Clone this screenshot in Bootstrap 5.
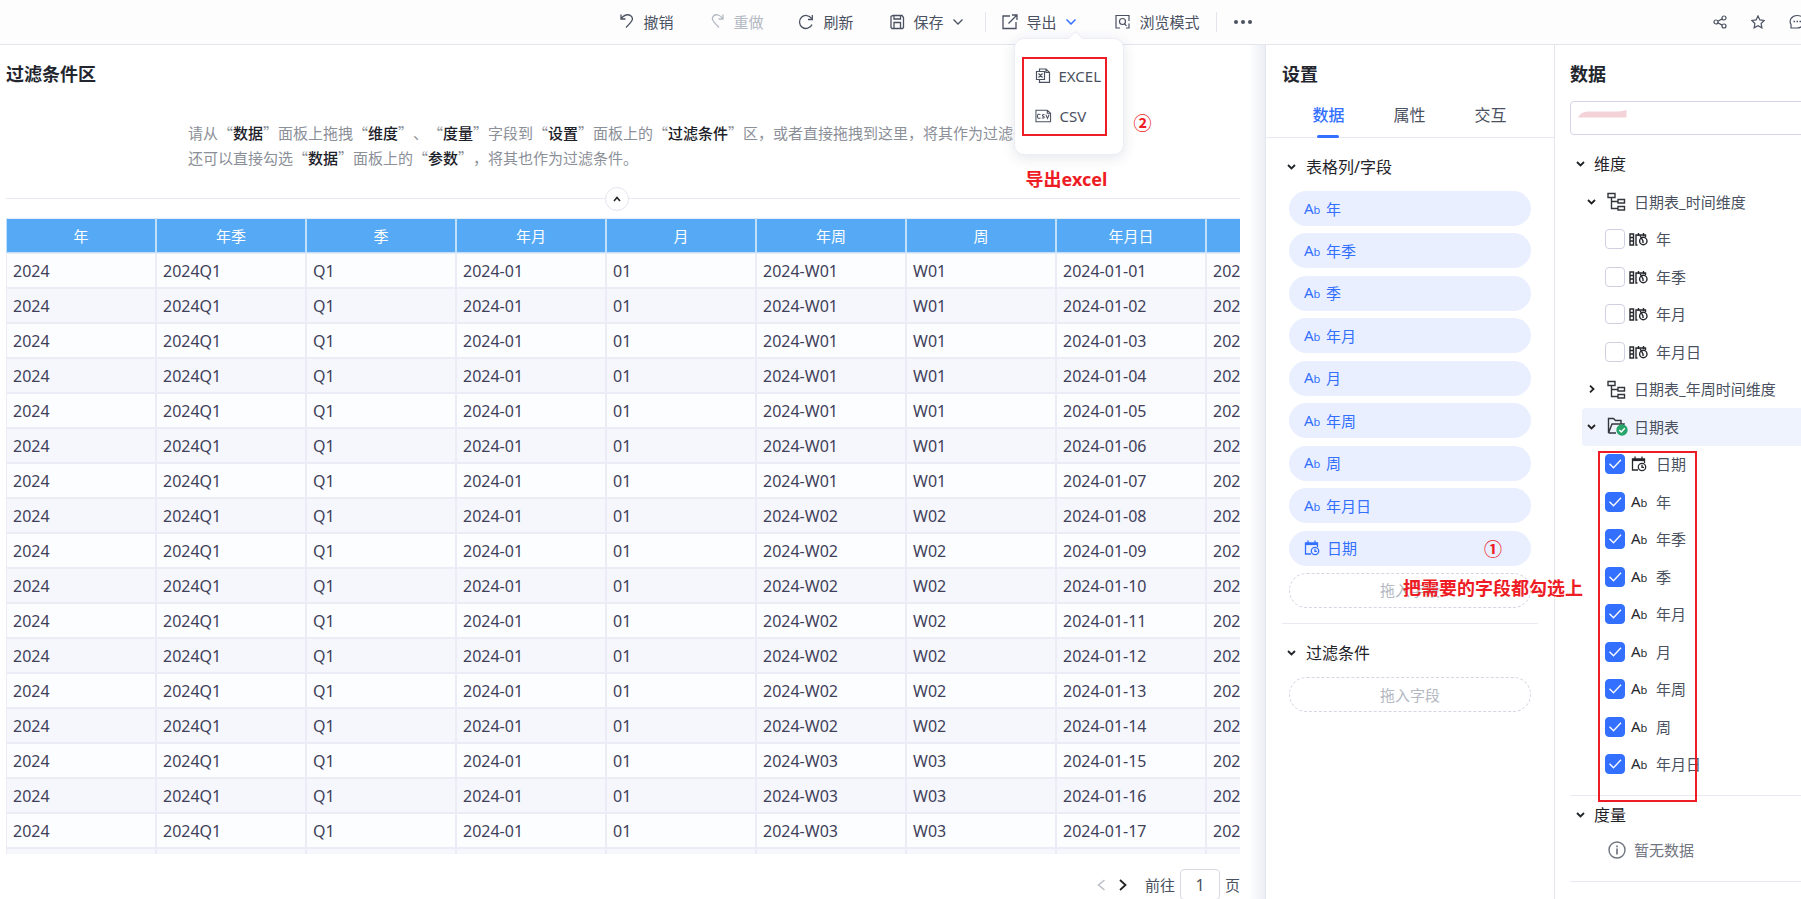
<!DOCTYPE html>
<html lang="zh-CN">
<head>
<meta charset="utf-8">
<meta name="viewport" content="width=device-width, initial-scale=1">
<title>过滤条件区</title>
<link rel="stylesheet" href="https://cdn.jsdelivr.net/npm/bootstrap@5.3.0/dist/css/bootstrap.min.css">
<style>
body{font-family:"Noto Sans","Noto Sans CJK SC",sans-serif;font-size:15px;line-height:22px;color:#4a5160;background:#fff}
svg{fill:none;flex:none}
svg:not([stroke]){stroke:currentColor}
button{color:inherit}
.topbar{height:45px;border-bottom:1px solid #e4e6ec;background:#fdfdfe;padding-left:70px;display:grid;grid-template-columns:1fr auto 1fr}
.tool{border:0;background:none;padding:0;display:flex;align-items:center;gap:9px;white-space:nowrap}
.tool:disabled{color:#b4b9c2}
.toolset{display:flex;align-items:center;gap:35px;margin-right:22px}
.vline{width:1px;height:20px;background:#e4e6ef}
.side-tools{margin-right:-4px}
.titleline{height:56px;padding-top:4px;font-size:18px;font-weight:700;color:#23262e;display:flex;align-items:center;margin:0;flex:none}
.canvas-pad{padding:0 25px 0 6px}
.shade{background:linear-gradient(to right,#fff calc(100% - 16px),#eceef5)}
.hint{font-family:"Noto Sans CJK SC",sans-serif;line-height:25px;color:#8b8f98;margin:19px auto 0;white-space:nowrap;height:78px;flex:none;text-spacing-trim:space-all;font-kerning:none}
.hint b{font-weight:500;color:#1c2028}
.foldline{height:1px;background:#e8e9f3;margin-bottom:19px;padding-right:12px}
.fold{width:24px;height:24px;border:1px solid #e4e6ee;background:#fff;padding:0;line-height:0}
.gridwrap{overflow:hidden}
.datagrid{table-layout:fixed;width:1350px;border-collapse:separate;border-spacing:0;color:#3f3f5a;font-size:16px}
.datagrid th,.datagrid td{height:35px;border:1px solid #ebecf6;padding:0 6px;line-height:22px}
.datagrid td{background:#fcfdff}
.datagrid tr:nth-child(even) td{background:#f6f7fc}
.datagrid th{background:#56a9f4;color:#fff;text-align:center;font-weight:400;font-size:15px;border-color:#bfdffa;border-top-color:#e4eef9}
.pager{height:45px;padding-top:16px}
.pager input{width:40px;height:31px;border:1px solid #d9dae6;border-radius:4px;text-align:center;color:#4a5160;font-size:16px;padding:0;margin:0 5px}
.pager button{border:0;background:none;padding:0;line-height:0}
.settings{width:290px;border-left:1px solid #e4e6ee;border-right:1px solid #e4e6ee;background:#fff}
.tabs{height:37px;border-bottom:1px solid #e8e9f1;padding-left:22px;font-size:16px;line-height:24px}
.tabs button{border:0;background:none;padding:0 0 9px;width:81px;position:relative}
.tabs .on{color:#3370ff;font-weight:500}
.tabs .on::after{content:"";position:absolute;left:29px;bottom:-1px;width:22px;height:3px;border-radius:2px;background:#3370ff}
.sect{font-size:16px;line-height:24px;color:#1f2329;display:flex;align-items:center;margin:0;font-weight:400}
.settings .sect{height:53px;padding:4px 0 0 21px;gap:10px}
.pills{height:417px;margin:0 23px}
.pill,.dropzone{height:35px;border-radius:18px;display:flex;align-items:center}
.pill{background:#e9efff;color:#3370ff;padding-left:15px;gap:7px}
.dropzone{border:1px dashed #d4d6e4;color:#b3b8c2;justify-content:center}
.ab{font-size:15px;width:15px;display:inline-flex;align-items:baseline;line-height:20px}
.ab i{font-style:normal;font-size:11px}
.rule{height:1px;background:#e8e9f1}
.datapane{width:246px;overflow:hidden;padding-left:15px}
.search{height:34px;width:260px;border:1px solid #d3d5e6;border-radius:4px}
.datapane .sect{gap:9px;padding-left:6px}
.tree{height:600px}
.node{flex:1 1 0;padding-left:17px;display:flex;align-items:center;white-space:nowrap}
.node.sel{background:#eff3fe;margin-left:12px;padding-left:5px;border-radius:4px 0 0 4px}
.leaf{padding-left:35px}
.leaf .form-check-input{width:20px;height:20px;margin:0 4px 0 0;border:1px solid #cfd1e2;border-radius:4px;box-shadow:none;flex:none}
.leaf .form-check-input:checked{background-color:#3370ff;border-color:#3370ff;background-size:20px;background-image:url("data:image/svg+xml,%3Csvg xmlns='http://www.w3.org/2000/svg' viewBox='0 0 20 20'%3E%3Cpath d='M4.5 9.8l4 4 7.500-8' fill='none' stroke='white' stroke-width='1.300'/%3E%3C/svg%3E")}
.kind{width:19px;margin-right:8px;display:flex;justify-content:center;color:#26282d}
.branch-ico{width:19px;margin:0 8px 0 11px;display:flex;color:#33363c}
.note{position:absolute;color:#ee1c25;font-weight:700;font-size:18px;line-height:24px;white-space:nowrap;z-index:5}
.frame{position:absolute;border:2px solid #ee1c25;z-index:5;pointer-events:none}
.export-menu{position:absolute;left:12px;top:27px;width:110px;height:117px;background:#fff;border:1px solid #eceef5;border-radius:10px;box-shadow:0 3px 14px rgba(40,50,90,.12);z-index:10;padding:17px 0 0 20px}
.export-menu::before{content:"";position:absolute;left:55px;top:-6px;width:11px;height:11px;background:#fff;border:solid #eceef5;border-width:1px 0 0 1px;transform:rotate(45deg)}
.export-menu button{border:0;background:none;padding:0;height:40px;display:flex;align-items:center;gap:8px}
</style>
<script src="https://cdn.jsdelivr.net/npm/bootstrap@5.3.0/dist/js/bootstrap.bundle.min.js"></script>
</head>
<body class="vh-100 overflow-hidden d-flex flex-column">
<header class="topbar position-relative flex-shrink-0">
  <span></span>
  <nav class="d-flex align-items-center position-relative" aria-label="工具栏">
    <div class="toolset">
      <button class="tool"><svg width="16" height="16" viewBox="-2 1 16 16" stroke-width="1.300"><path d="M1 1.500V6h4.500M1.300 5.500C3.500 2 8 .5 11 3c3 2.700 1.500 5-5 11.500"/></svg>撤销</button>
      <button class="tool" disabled><svg width="16" height="16" viewBox="-3 1 16 16" stroke-width="1.300"><path d="M12 1.500V6H7.500M11.700 5.500C9.500 2 5 .5 2.500 3 0 5.700 1.500 8 8 14.500"/></svg>重做</button>
      <button class="tool"><svg width="16" height="16" viewBox="0 0 16 16" stroke-width="1.300"><path d="M14 10.500A6.500 6.500 0 1 1 13.500 4.500M14.300 1v4.500H10"/></svg>刷新</button>
      <button class="tool"><svg width="16" height="16" viewBox="0 0 16 16" stroke-width="1.300"><path d="M4 1.500h9l1.500 2v10l-1 1H3l-1-1v-11zM5 1.500v3.500h6.500V1.500M5 14.500V8.500h6.500v6"/></svg>保存<svg width="10" height="6" viewBox="0 0 10 6" stroke-width="1.300"><path d="M.5.5L5 5 9.500.5"/></svg></button>
    </div>
    <span class="vline me-3"></span>
    <div class="position-relative">
      <button class="tool"><svg width="16" height="16" viewBox="0 0 16 16" stroke-width="1.300"><path d="M8 2H1v12.500h13V8M10 1h5v5M15 1L6.500 9.500"/></svg>导出<svg width="10" height="6" viewBox="0 0 10 6" stroke="#3370ff" stroke-width="1.500"><path d="M.5.5L5 5 9.500.5"/></svg></button>
      <div class="export-menu">
        <button><svg width="16" height="16" viewBox="0 0 16 16" stroke-width="1.200"><path d="M4.500 3V1h6.500l3.500 3.500v9.900H4.500V12M11 1v3.500h3.500M1.500 3.500h8v8h-8zM3.500 5.500l4 4m0-4l-4 4"/></svg>EXCEL</button>
        <button><svg width="17" height="14" viewBox="0 0 18 14" stroke-width="1.100"><path d="M1 4V1h12l3.500 3V13H1V4M13 1v3h3.500M5.800 5.500C4 4.500 2.500 5.200 2.500 7.300s1.500 2.700 3.300 1.700M10 5.500C8 4.800 7 6.800 8.700 7.200s1.500 2.500-1.500 1.800M11.500 5.500l1.700 4L15 5.500"/></svg>CSV</button>
        <span class="frame" style="left:7px;top:18px;width:85px;height:79px"></span>
        <span class="note" style="left:11px;top:128px">导出excel</span>
        <span class="note" style="left:119px;top:72px">②</span>
      </div>
    </div>
    <button class="tool" style="margin-left:39px"><svg width="16" height="16" viewBox="0 0 16 16" stroke-width="1.200"><path d="M5 14H1V1.500h13V7M14 9.500V14h-3"/><circle cx="7.500" cy="7.500" r="3"/><path d="M9.500 9.800l2 2"/></svg>浏览模式</button>
    <span class="vline mx-3"></span>
    <button class="tool" aria-label="更多"><svg width="20" height="6" viewBox="0 0 20 6"><g fill="currentColor" stroke="none"><circle cx="3" cy="3" r="2"/><circle cx="10" cy="3" r="2"/><circle cx="17" cy="3" r="2"/></g></svg></button>
  </nav>
  <div class="d-flex align-items-center justify-content-end side-tools">
    <button class="tool me-4" aria-label="分享"><svg width="14" height="14" viewBox="0 0 14 14" stroke-width="1.200"><circle cx="3" cy="7" r="2"/><circle cx="11" cy="3" r="2"/><circle cx="11" cy="11" r="2"/><path d="M4.800 6.200L9.200 3.900M4.800 7.800l4.400 2.300"/></svg></button>
    <button class="tool me-4" aria-label="收藏"><svg width="14" height="14" viewBox="0 0 14 14" stroke-width="1.200"><path d="M7 .9l1.900 4 4.300.6-3.100 3 .8 4.400L7 10.800l-3.900 2.100.8-4.400-3.100-3 4.300-.6z"/></svg></button>
    <button class="tool" aria-label="评论"><svg width="16" height="16" viewBox="0 0 16 16" stroke-width="1.200"><path d="M2 14V10.500C-.5 6 3 1.500 8 1.500S15.500 4.500 15.500 7.700 12.500 14 8 14z"/><path d="M4.500 7.500h1.500M7.500 7.500H9M10.500 7.500H12" stroke-width="1.600"/></svg></button>
  </div>
</header>

<div class="d-flex flex-grow-1" style="min-height:0">
  <main class="flex-grow-1 d-flex flex-column canvas-pad shade" style="min-width:0">
    <h1 class="titleline">过滤条件区</h1>
    <p class="hint">请从“<b>数据</b>”面板上拖拽“<b>维度</b>”、“<b>度量</b>”字段到“<b>设置</b>”面板上的“<b>过滤条件</b>”区，或者直接拖拽到这里，将其作为过滤条件，<br>还可以直接勾选“<b>数据</b>”面板上的“<b>参数</b>”，将其也作为过滤条件。</p>
    <div class="foldline d-flex align-items-center justify-content-center flex-shrink-0"><button class="fold rounded-circle flex-shrink-0" aria-label="收起"><svg width="8" height="6" viewBox="0 0 8 6" stroke="#222" stroke-width="1.600"><path d="M1 5l3-3.500L7 5"/></svg></button></div>
    <div class="gridwrap flex-grow-1" style="min-height:0">
      <table class="datagrid">
        <thead><tr><th>年</th><th>年季</th><th>季</th><th>年月</th><th>月</th><th>年周</th><th>周</th><th>年月日</th><th>日期</th></tr></thead>
        <tbody id="rows"></tbody>
      </table>
    </div>
    <div class="pager d-flex align-items-center justify-content-end flex-shrink-0">
      <button aria-label="上一页" style="margin-right:13px"><svg width="9" height="12" viewBox="0 0 9 12" stroke="#bcc0c8" stroke-width="1.600"><path d="M7.500 1l-6 5 6 5"/></svg></button>
      <button aria-label="下一页" style="margin-right:18px"><svg width="8" height="12" viewBox="0 0 8 12" stroke="#222" stroke-width="1.800"><path d="M1 1l5.500 5L1 11"/></svg></button>
      <label for="page">前往</label><input id="page" value="1"><span>页</span>
    </div>
  </main>

  <section class="settings flex-shrink-0">
    <h2 class="titleline ps-3">设置</h2>
    <div class="tabs d-flex"><button class="on">数据</button><button>属性</button><button>交互</button></div>
    <h3 class="sect"><svg width="9" height="6" viewBox="0 0 9 6" stroke-width="1.800"><path d="M1 1l3.500 3.500L8 1"/></svg>表格列/字段</h3>
    <div class="pills d-flex flex-column justify-content-between" id="pills"></div>
    <div class="rule mx-3" style="margin-top:15px"></div>
    <h3 class="sect"><svg width="9" height="6" viewBox="0 0 9 6" stroke-width="1.800"><path d="M1 1l3.500 3.500L8 1"/></svg>过滤条件</h3>
    <div class="dropzone" style="margin:0 23px">拖入字段</div>
  </section>

  <aside class="datapane flex-shrink-0">
    <h2 class="titleline">数据</h2>
    <div class="position-relative"><input class="search d-block" aria-label="搜索"><svg class="position-absolute" style="left:8px;top:9px" width="50" height="8" viewBox="0 0 50 8"><path d="M0 7.500Q3 1.500 10 1.500H38Q44 1.500 48.500 0V7.500z" fill="#f3d3d7" stroke="none"/></svg></div>
    <h3 class="sect" style="height:48px;padding-top:10px"><svg width="9" height="6" viewBox="0 0 9 6" stroke-width="1.800"><path d="M1 1l3.500 3.500L8 1"/></svg>维度</h3>
    <div class="tree d-flex flex-column position-relative" id="tree"></div>
    <div class="rule" style="margin-top:12px"></div>
    <h3 class="sect" style="height:38px"><svg width="9" height="6" viewBox="0 0 9 6" stroke-width="1.800"><path d="M1 1l3.500 3.500L8 1"/></svg>度量</h3>
    <div class="d-flex align-items-center" style="height:32px;padding-left:38px;gap:8px;color:#71757f"><svg width="18" height="18" viewBox="0 0 18 18" stroke-width="1.400"><circle cx="9" cy="9" r="8"/><path d="M9 7.500v6M9 4.500v1.700" stroke-width="1.700"/></svg>暂无数据</div>
    <div class="rule" style="margin-top:15px"></div>
  </aside>
</div>
<script>
const AB='<span class="ab">A<i>b</i></span>';
const CAL='<svg width="16" height="16" viewBox="0 0 16 16" stroke-width="1.300"><path d="M7 14H1.500V3h12v4M4 .5v3M11 .5v3"/><path d="M1.500 4h12" stroke-width="2.200"/><circle cx="11" cy="11" r="3.700"/><path d="M11 8.800V11.300h2"/></svg>';
const HIER='<svg width="19" height="19" viewBox="0 0 19 19" stroke-width="1.400"><path d="M1 1.500h7v4H1zM4.500 5.500v11H11M4.500 9.500H11M11 7.500h6.500v3.500H11zM11 14.500h6.500V18H11z"/></svg>';
const PERIOD='<svg width="19" height="14" viewBox="0 0 19 14" stroke-width="1.400"><path d="M1 2h3.500v11H1zM1 5.500h3.500M1 9h3.500M8.500 13H7V3h9.500v2M9.500 1v3M14.500 1v3"/><circle cx="14.300" cy="9" r="3.700"/><path d="M11 3.500l3 5.500v2"/></svg>';
const FOLDER='<svg width="21" height="19" viewBox="0 0 21 19" stroke-width="1.400"><path d="M1.500 16V1.500h5l2 2H14V7M1.500 16L5 7h12l-1 3M1.500 16H9"/><circle cx="15" cy="13" r="5.700" fill="#27a56b" stroke="none"/><path d="M12.300 13l2 2 3.500-3.700" stroke="#fff"/></svg>';
const DOWN='<svg width="9" height="6" viewBox="0 0 9 6" stroke="#222" stroke-width="1.800"><path d="M1 1l3.500 3.500L8 1"/></svg>';
const RIGHT='<svg width="9" height="8" viewBox="0 0 9 8" stroke="#222" stroke-width="1.800"><path d="M3 .7L6.500 4 3 7.300"/></svg>';

document.getElementById('rows').innerHTML=Array.from({length:18},(_,i)=>{
  const d=String(i+1).padStart(2,'0'),w='W0'+(Math.floor(i/7)+1);
  return '<tr>'+['2024','2024Q1','Q1','2024-01','01','2024-'+w,w,'2024-01-'+d,'2024-01-'+d].map(t=>`<td>${t}</td>`).join('')+'</tr>';
}).join('');

const fields=['年','年季','季','年月','月','年周','周','年月日'];
document.getElementById('pills').innerHTML=
  fields.map(f=>`<div class="pill">${AB}${f}</div>`).join('')+
  `<div class="pill position-relative">${CAL}日期<span class="note" style="right:29px;top:6px">①</span></div>`+
  `<div class="dropzone position-relative">拖入字段<span class="note" style="left:113px;top:2px">把需要的字段都勾选上</span></div>`;

let n=0;
const branch=(arrow,icon,text,cls='')=>`<div class="node ${cls}">${arrow}<span class="branch-ico">${icon}</span>${text}</div>`;
const leaf=(icon,text,on)=>{n++;return `<div class="node leaf"><input class="form-check-input" type="checkbox" id="f${n}"${on?' checked':''}><span class="kind">${icon}</span><label for="f${n}">${text}</label></div>`};
document.getElementById('tree').innerHTML=
  branch(DOWN,HIER,'日期表_时间维度')+
  ['年','年季','年月','年月日'].map(t=>leaf(PERIOD,t,false)).join('')+
  branch(RIGHT,HIER,'日期表_年周时间维度')+
  branch(DOWN,FOLDER,'日期表','sel')+
  leaf(CAL,'日期',true)+
  fields.map(t=>leaf(AB,t,true)).join('')+
  '<span class="frame" style="left:28px;top:268px;width:99px;height:351px"></span>';
</script>
</body>
</html>
